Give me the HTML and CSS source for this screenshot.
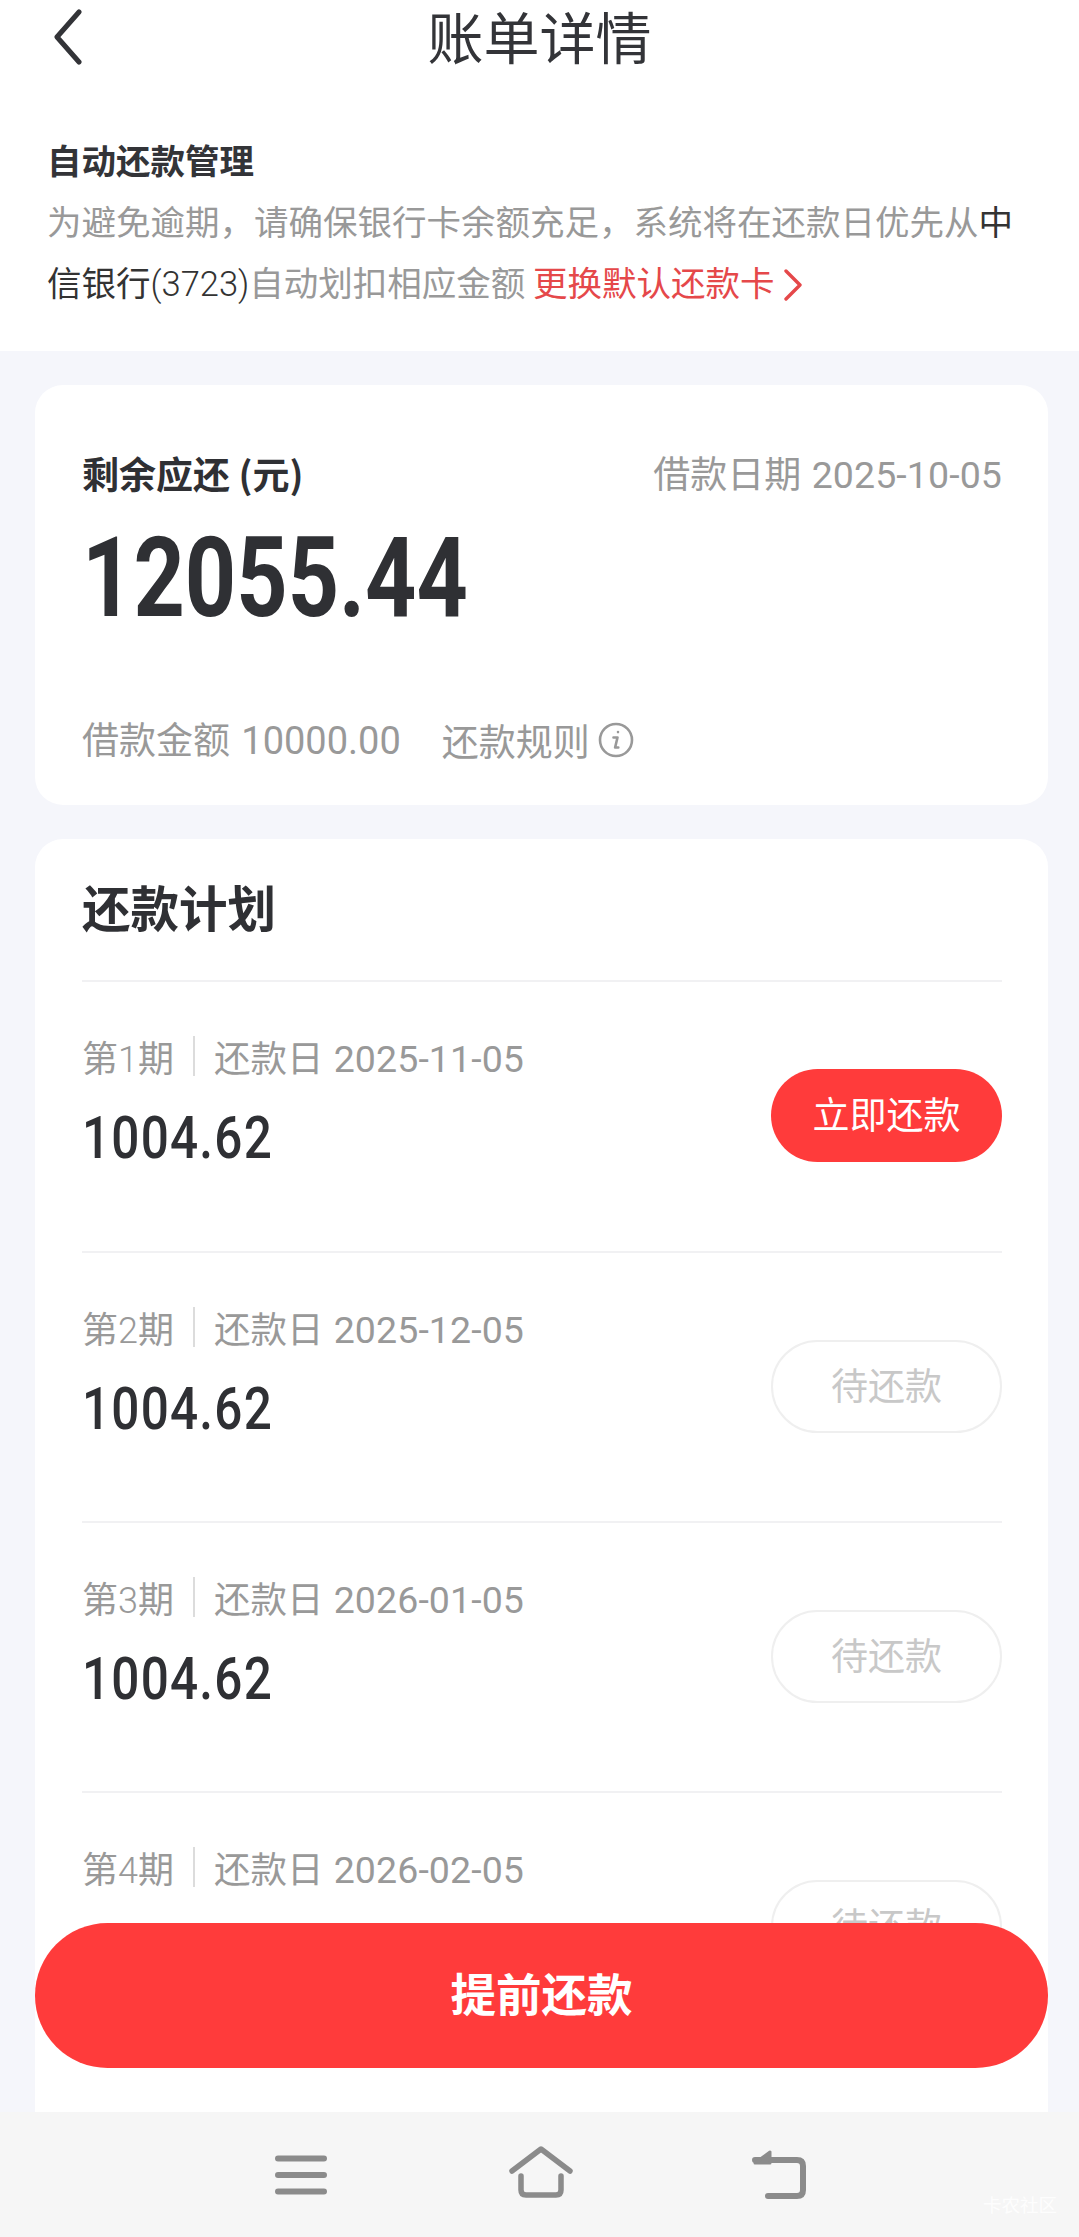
FILE: index.html
```html
<!DOCTYPE html>
<html lang="zh-CN">
<head>
<meta charset="utf-8">
<title>账单详情</title>
<link rel="stylesheet" href="styles.css">
</head>
<body>
<div class="page">
  <section class="top">
    <header class="titlebar">
      <svg class="back" width="32" height="56" viewBox="0 0 32 56"><path d="M27 3 5 28l22 25" fill="none" stroke="#333438" stroke-width="5" stroke-linecap="round" stroke-linejoin="round"/></svg>
      <h1 class="title">账单详情</h1>
    </header>
    <div class="auto">
      <h2 class="auto-title">自动还款管理</h2>
      <p class="auto-desc">为避免逾期，请确保银行卡余额充足，系统将在还款日优先从<span class="dark">中<br>信银行<span class="num">(3723)</span></span>自动划扣相应金额 <a class="change">更换默认还款卡<svg class="chev" width="20" height="32" viewBox="0 0 20 32"><path d="M3 2l14 14L3 30" fill="none" stroke="#e5484a" stroke-width="3.4" stroke-linecap="round" stroke-linejoin="round"/></svg></a></p>
    </div>
  </section>

  <main class="content">
    <section class="card summary">
      <div class="sum-head">
        <span class="sum-label">剩余应还 (元)</span>
        <span class="muted">借款日期 <span class="num num-lg">2025-10-05</span></span>
      </div>
      <div class="sum-amount">12055.44</div>
      <div class="sum-foot muted">
        <span>借款金额 <span class="num num-xl">10000.00</span></span>
        <span class="rule">还款规则
          <svg class="info" width="36" height="36" viewBox="0 0 36 36"><circle cx="18" cy="18" r="16" fill="none" stroke="#999" stroke-width="2.6"/><path d="M20 10v.1M15.500 15.500h4l-2.400 10h3.200" fill="none" stroke="#999" stroke-width="2.6" stroke-linecap="round" stroke-linejoin="round"/></svg>
        </span>
      </div>
    </section>

    <section class="card plan">
      <h2 class="plan-title">还款计划</h2>
      <div class="row">
        <div class="row-info">
          <div class="row-meta"><span class="period">第<span class="num">1</span>期</span><i class="sep"></i><span>还款日 <span class="num num-lg">2025-11-05</span></span></div>
          <div class="row-amount">1004.62</div>
        </div>
        <button class="pill pill-now">立即还款</button>
      </div>
      <div class="row">
        <div class="row-info">
          <div class="row-meta"><span class="period">第<span class="num">2</span>期</span><i class="sep"></i><span>还款日 <span class="num num-lg">2025-12-05</span></span></div>
          <div class="row-amount">1004.62</div>
        </div>
        <button class="pill pill-wait">待还款</button>
      </div>
      <div class="row">
        <div class="row-info">
          <div class="row-meta"><span class="period">第<span class="num">3</span>期</span><i class="sep"></i><span>还款日 <span class="num num-lg">2026-01-05</span></span></div>
          <div class="row-amount">1004.62</div>
        </div>
        <button class="pill pill-wait">待还款</button>
      </div>
      <div class="row">
        <div class="row-info">
          <div class="row-meta"><span class="period">第<span class="num">4</span>期</span><i class="sep"></i><span>还款日 <span class="num num-lg">2026-02-05</span></span></div>
          <div class="row-amount">1004.62</div>
        </div>
        <button class="pill pill-wait">待还款</button>
      </div>
    </section>
  </main>

  <button class="prepay">提前还款</button>

  <nav class="sysnav">
    <svg class="nav-ico" width="52" height="44" viewBox="0 0 52 44"><path d="M3 5.500h46M3 22h46M3 38.500h46" fill="none" stroke="#8b8b8b" stroke-width="6" stroke-linecap="round"/></svg>
    <svg class="nav-ico" width="66" height="54" viewBox="0 0 66 54"><path d="M4 25 33 3l29 22M13 30v14q0 5 5 5h30q5 0 5-5V30" fill="none" stroke="#8b8b8b" stroke-width="5.500" stroke-linecap="round" stroke-linejoin="round"/></svg>
    <svg class="nav-ico" width="54" height="50" viewBox="0 0 54 50"><path d="M3 11h42q6 0 6 6v24q0 6-6 6H16" fill="none" stroke="#8b8b8b" stroke-width="6" stroke-linecap="round" stroke-linejoin="round"/><path d="M18 3v11H3z" fill="#8b8b8b" stroke="#8b8b8b" stroke-width="3" stroke-linejoin="round"/></svg>
  </nav>
  <span class="watermark">卡农社区</span>
</div>
</body>
</html>
```
FILE: styles.css
```css
* { box-sizing: border-box; }
html, body { margin: 0; padding: 0; }
body { font-family: "Noto Sans CJK SC", "Noto Sans", sans-serif; color: #2f3034; background: #f5f6fb; }
.page { position: relative; width: 1079px; height: 2237px; overflow: hidden; display: flex; flex-direction: column; background: #f5f6fb; }

.top { height: 351px; background: #fff; flex: none; }
.titlebar { position: relative; height: 76px; display: flex; justify-content: center; align-items: flex-start; }
.back { position: absolute; left: 52px; top: 9px; }
.title { margin: 0; font-size: 56px; font-weight: 400; line-height: 70px; color: #333438; }
.auto { padding: 57px 40px 0 47px; }
.auto-title { margin: 0; font-size: 34.500px; font-weight: 700; line-height: 52px; color: #333438; }
.auto-desc { margin: 0; padding-top: 5px; font-size: 34.500px; line-height: 61px; color: #999; white-space: nowrap; }
.dark { color: #333; }
.change { color: #e5484a; }
.chev { margin-left: 8px; vertical-align: -5px; }
.num { font-family: Roboto, sans-serif; font-weight: 300; }
.num-lg { font-size: 37.500px; font-weight: 400; letter-spacing: .1px; margin-left: 2px; }
.num-xl { font-size: 38px; font-weight: 400; margin-left: 3px; }

.content { flex: 1; min-height: 0; padding: 34px 31px 0 35px; display: flex; flex-direction: column; gap: 34px; }
.card { background: #fff; border-radius: 28px; }
.summary { height: 420px; flex: none; padding: 62px 46px 0 47px; }
.sum-head { display: flex; justify-content: space-between; align-items: center; height: 52px; }
.sum-label { font-size: 37px; font-weight: 700; }
.muted { color: #999; font-size: 37px; line-height: 52px; }
.sum-amount { margin-top: 14px; height: 130px; font-family: Roboto, sans-serif; font-weight: 700; font-size: 112px; line-height: 130px; color: #2f3034; transform: scaleX(.8); transform-origin: left center; }
.sum-foot { margin-top: 69px; display: flex; gap: 41px; }
.rule { display: inline-flex; align-items: center; gap: 8px; }

.plan { flex: 1; min-height: 0; border-radius: 28px 28px 0 0; padding: 0 46px 0 47px; overflow: hidden; }
.plan-title { margin: 0; height: 141px; font-size: 48.500px; font-weight: 700; line-height: 134px; color: #2f3034; }
.row { height: 270px; border-top: 2px solid #f1f1f3; padding-top: 46px; display: flex; justify-content: space-between; align-items: flex-start; }
.row:nth-of-type(1) { height: 271px; }
.row-meta { display: flex; align-items: center; height: 56px; color: #999; font-size: 36.500px; }
.period { font-size: 36px; }
.sep { width: 2px; height: 40px; margin: 0 19px; background: #dcdcdc; }
.row-amount { margin-top: 19px; height: 70px; font-family: Roboto, sans-serif; font-weight: 500; font-size: 60px; line-height: 70px; letter-spacing: 1.500px; color: #2f3034; transform: scaleX(.824); transform-origin: left center; }
.pill { margin-top: 41px; width: 231px; height: 93px; border-radius: 47px; font-family: inherit; font-size: 37px; padding: 0 0 5px; }
.pill-now { background: #ff3b3b; border: 0; color: #fff; }
.pill-wait { background: #fff; border: 2px solid #efefef; color: #c8c8c8; }

.prepay { position: absolute; left: 35px; top: 1923px; width: 1013px; height: 145px; border: 0; border-radius: 73px; background: #ff3b3b; color: #fff; font-family: inherit; font-size: 45.500px; font-weight: 700; padding: 0 0 8px; }

.sysnav { flex: none; height: 125px; background: #f6f6f6; position: relative; display: flex; align-items: flex-start; padding: 34px 0 0 275px; }
.nav-ico { display: block; flex: none; }
.nav-ico:nth-child(1) { margin-top: 7px; }
.nav-ico:nth-child(2) { margin-left: 181px; }
.nav-ico:nth-child(3) { margin-left: 178px; margin-top: 3px; }
.watermark { position: absolute; right: 22px; bottom: 20px; font-size: 18.500px; line-height: 25px; color: rgba(255,255,255,.85); }
```
